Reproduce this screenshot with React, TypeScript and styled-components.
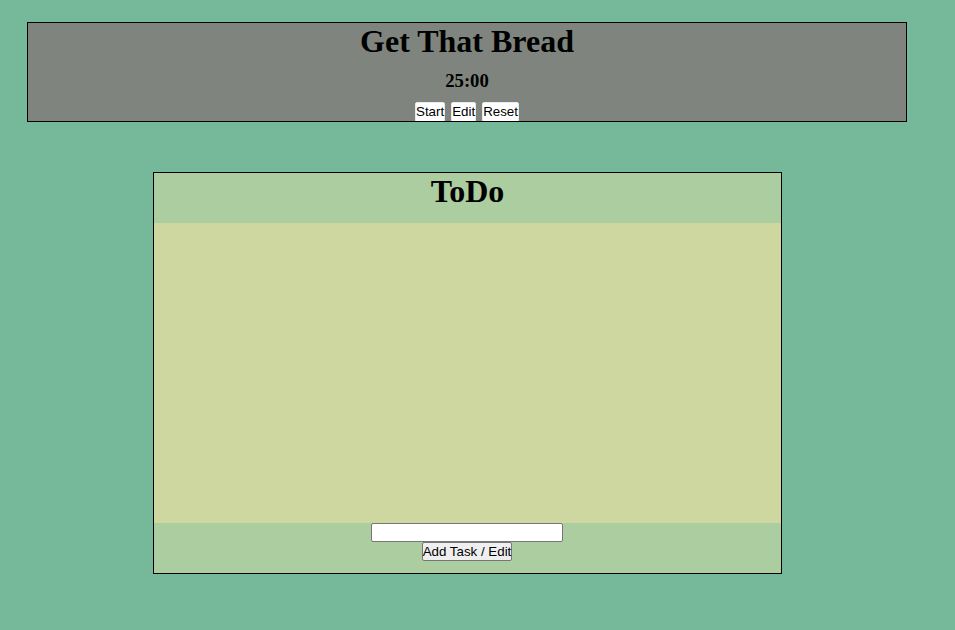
import styled, { createGlobalStyle } from 'styled-components';

const GlobalStyle = createGlobalStyle`
  body {
    margin: 0;
    background: #76b99a;
    font-family: "Liberation Serif", "Times New Roman", serif;
  }
`;

const Page = styled.main`
  width: 919px;
  padding: 22px 8px 0;
  display: flex;
  flex-direction: column;
  align-items: center;
`;

const Timer = styled.header`
  width: 878px;
  height: 98px;
  margin-right: 1px;
  border: 1px solid #000;
  background: #7f857e;
  display: flex;
  flex-direction: column;
  align-items: center;
  overflow: hidden;

  h1 {
    margin: 0;
    font-size: 32px;
    line-height: 37px;
    font-weight: 700;
  }

  h3 {
    margin: 10px 0 0;
    font-size: 18.72px;
    line-height: 22px;
    font-weight: 700;
  }
`;

const Controls = styled.div`
  display: flex;
  gap: 6px;
  margin-top: 10px;
`;

const TimerButton = styled.button`
  font-family: "Liberation Sans", Arial, sans-serif;
  font-size: 13.33px;
  line-height: 16px;
  padding: 1px 0;
  background: #fff;
  border: 1px solid #eaeaea;
  border-radius: 2px;
  color: #000;
`;

const Todo = styled.section`
  margin-top: 50px;
  width: 627px;
  border: 1px solid #000;
  background: #abcd9f;
  display: flex;
  flex-direction: column;

  h1 {
    margin: 0;
    height: 50px;
    font-size: 32px;
    line-height: 37px;
    font-weight: 700;
    text-align: center;
  }
`;

const TaskList = styled.ul`
  margin: 0;
  padding: 0;
  list-style: none;
  height: 300px;
  background: #ced7a0;
`;

const TaskForm = styled.form`
  height: 50px;
  display: flex;
  flex-direction: column;
  align-items: center;
`;

const TaskInput = styled.input`
  box-sizing: border-box;
  width: 192px;
  height: 19px;
  margin: 0 1px 0 0;
  padding: 1px 2px;
  border: 1px solid #767676;
  border-radius: 2px;
  background: #fff;
  font-family: "Liberation Sans", Arial, sans-serif;
  font-size: 13.33px;
`;

const AddButton = styled.button`
  box-sizing: border-box;
  height: 19px;
  margin-right: 1px;
  padding: 0;
  border: 1px solid #767676;
  border-radius: 2px;
  background: #efefef;
  color: #000;
  font-family: "Liberation Sans", Arial, sans-serif;
  font-size: 13.33px;
  line-height: 16px;
`;

export default function App() {
  return (
    <>
      <GlobalStyle />
      <Page>
        <Timer>
          <h1>Get That Bread</h1>
          <h3>25:00</h3>
          <Controls>
            <TimerButton type='button'>Start</TimerButton>
            <TimerButton type='button'>Edit</TimerButton>
            <TimerButton type='button'>Reset</TimerButton>
          </Controls>
        </Timer>
        <Todo>
          <h1>ToDo</h1>
          <TaskList />
          <TaskForm onSubmit={(e) => e.preventDefault()}>
            <TaskInput type='text' />
            <AddButton type='submit'>Add Task / Edit</AddButton>
          </TaskForm>
        </Todo>
      </Page>
    </>
  );
}
